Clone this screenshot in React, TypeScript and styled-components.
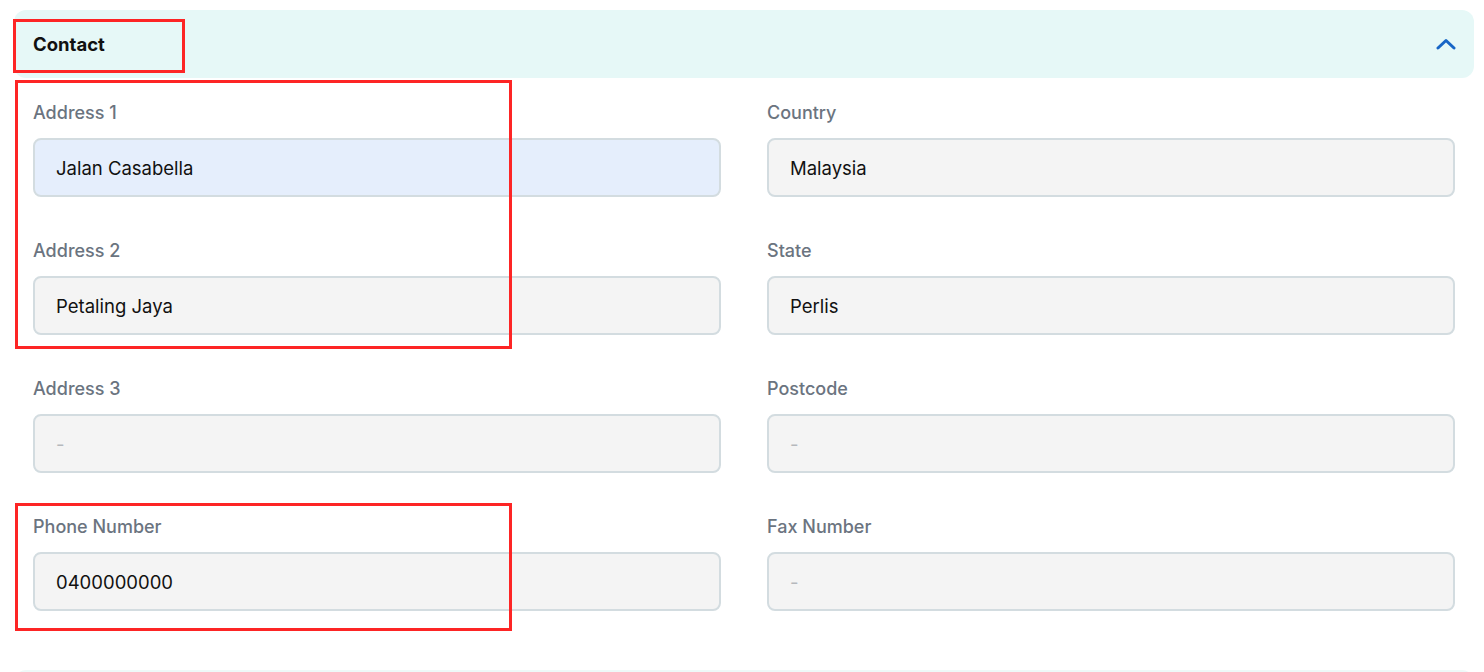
import React from "react";
import styled, { createGlobalStyle } from "styled-components";

const Global = createGlobalStyle`
  html, body { margin: 0; padding: 0; background: #ffffff; }
  body { font-family: "Inter", "Lato", "Noto Sans", sans-serif; }
  * { box-sizing: border-box; }
`;

const Page = styled.div`
  position: relative;
  padding: 10px 10px 0 14px;
  height: 672px;
  overflow: hidden;
`;

const Section = styled.section`
  display: flex;
  flex-direction: column;
`;

const Header = styled.div`
  height: 68px;
  background: #e6f8f7;
  border-radius: 12px;
  display: flex;
  align-items: center;
  justify-content: space-between;
  padding: 0 18px 0 19px;
`;

const Title = styled.h2`
  margin: 0;
  font-size: 18.5px;
  font-weight: 700;
  color: #111111;
`;

const Grid = styled.div`
  display: grid;
  grid-template-columns: 688px 688px;
  column-gap: 46px;
  row-gap: 42px;
  padding: 23px 19px 59px 19px;
`;

const Field = styled.div`
  display: flex;
  flex-direction: column;
  gap: 13px;
`;

const Label = styled.label`
  font-size: 18px;
  line-height: 24px;
  font-weight: 500;
  color: #6b7480;
`;

const Input = styled.div<{ $active?: boolean; $empty?: boolean }>`
  height: 59px;
  border: 2px solid #d3dce0;
  border-radius: 8px;
  background: ${(p) => (p.$active ? "#e5eefc" : "#f4f4f4")};
  display: flex;
  align-items: center;
  padding-left: 21px;
  font-size: 18.5px;
  color: ${(p) => (p.$empty ? "#b5b8bc" : "#111111")};
`;

const NextHeader = styled.div`
  height: 68px;
  background: #eef9f8;
  border-radius: 12px;
`;

const Mark = styled.div<{ $x: number; $y: number; $w: number; $h: number }>`
  position: absolute;
  left: ${(p) => p.$x}px;
  top: ${(p) => p.$y}px;
  width: ${(p) => p.$w}px;
  height: ${(p) => p.$h}px;
  border: 3.5px solid #fd2525;
  pointer-events: none;
`;

const Chevron = () => (
  <svg width="20" height="12" viewBox="0 0 20 12" fill="none">
    <path d="M2 10 L10 2.5 L18 10" stroke="#1866c6" strokeWidth="3" strokeLinecap="round" strokeLinejoin="round" />
  </svg>
);

type F = { label: string; value: string; active?: boolean };

const fields: F[] = [
  { label: "Address 1", value: "Jalan Casabella", active: true },
  { label: "Country", value: "Malaysia" },
  { label: "Address 2", value: "Petaling Jaya" },
  { label: "State", value: "Perlis" },
  { label: "Address 3", value: "-" },
  { label: "Postcode", value: "-" },
  { label: "Phone Number", value: "0400000000" },
  { label: "Fax Number", value: "-" },
];

export default function App() {
  return (
    <>
      <Global />
      <Page>
        <Section>
          <Header>
            <Title>Contact</Title>
            <Chevron />
          </Header>
          <Grid>
            {fields.map((f) => (
              <Field key={f.label}>
                <Label>{f.label}</Label>
                <Input $active={f.active} $empty={f.value === "-"}>
                  {f.value}
                </Input>
              </Field>
            ))}
          </Grid>
        </Section>
        <NextHeader />
        <Mark $x={13} $y={19} $w={172} $h={54} />
        <Mark $x={15} $y={80} $w={497} $h={269} />
        <Mark $x={15} $y={503} $w={497} $h={128} />
      </Page>
    </>
  );
}
